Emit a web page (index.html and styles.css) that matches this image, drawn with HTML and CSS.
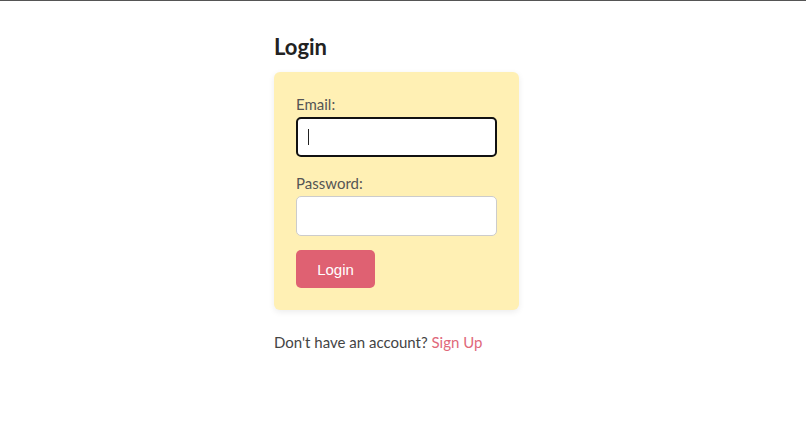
FILE: index.html
```html
<!DOCTYPE html>
<html>
<head>
<meta charset="utf-8">
<link rel="stylesheet" href="styles.css">
</head>
<body>
<div class="page">
  <h2 class="title">Login</h2>
  <form class="card">
    <label class="label">Email:</label>
    <div class="input focused"><span class="caret"></span></div>
    <label class="label">Password:</label>
    <div class="input"></div>
    <button class="btn" type="button">Login</button>
  </form>
  <p class="footer">Don't have an account? <a class="link" href="#">Sign Up</a></p>
</div>
</body>
</html>
```
FILE: styles.css
```css
html, body {
  margin: 0;
  padding: 0;
  background: #fff;
}
body {
  border-top: 1px solid #555;
  font-family: Lato, "Noto Sans", sans-serif;
  color: #333;
}
.page {
  width: 258px;
  margin: 0 auto;
  padding-top: 33px;
}
.title {
  margin: 0 0 12px;
  font-size: 22px;
  font-weight: 700;
  color: #222;
  line-height: 26px;
}
.card {
  width: 245px;
  box-sizing: border-box;
  background: #fff0b4;
  border-radius: 6px;
  padding: 22px;
  box-shadow: 0 2px 6px rgba(0,0,0,0.08);
  display: flex;
  flex-direction: column;
}
.label {
  font-size: 15px;
  line-height: 20px;
  color: #555;
  margin-bottom: 3px;
}
.input {
  height: 40px;
  box-sizing: border-box;
  background: #fff;
  border: 1px solid #ccc;
  border-radius: 5px;
  margin-bottom: 16px;
  display: flex;
  align-items: center;
  padding-left: 11px;
}
.input.focused {
  border: 2px solid #111;
  padding-left: 10px;
}
.caret {
  width: 1px;
  height: 16px;
  background: #222;
}
.btn {
  align-self: flex-start;
  width: 79px;
  height: 38px;
  margin-top: -2px;
  background: #df6172;
  color: #fff;
  border: none;
  border-radius: 5px;
  font-family: "Liberation Sans", Arial, sans-serif;
  font-size: 15px;
}
.footer {
  margin: 23px 0 0;
  font-size: 15px;
  color: #444;
}
.link {
  color: #e0687a;
  text-decoration: none;
}
```
